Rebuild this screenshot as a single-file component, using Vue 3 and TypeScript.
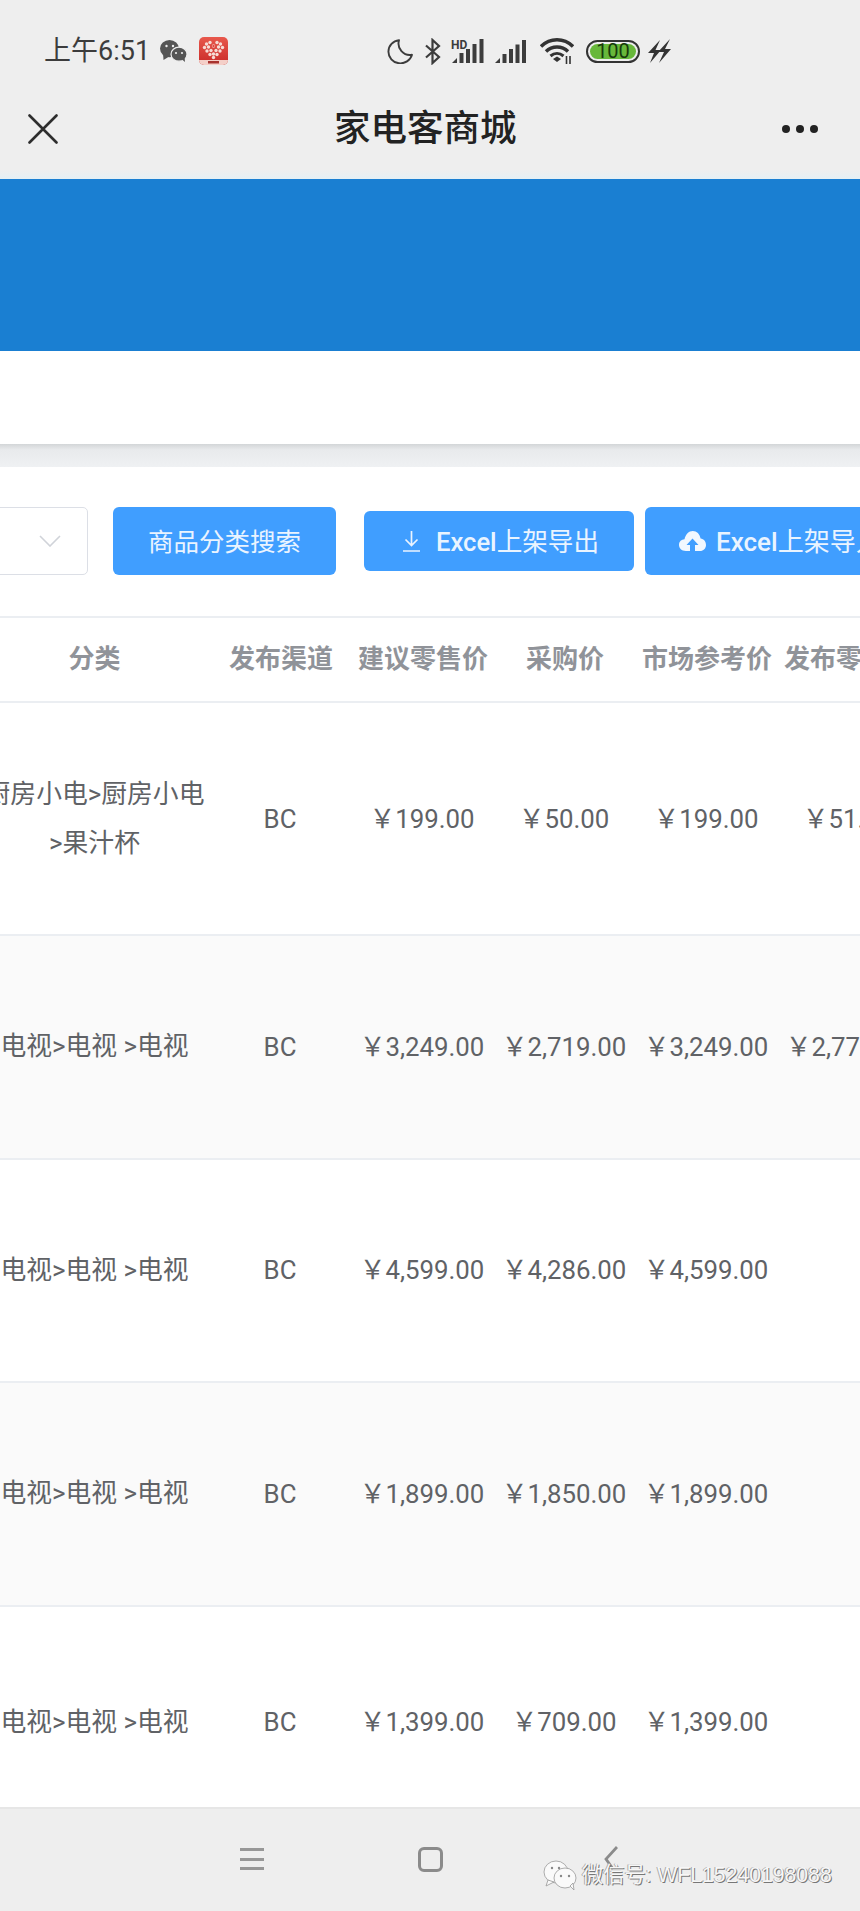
<script setup lang="ts">
interface Row { cat: string; ch: string; retail: string; buy: string; market: string; pub: string }
const rows: Row[] = [
  { cat: '厨房小电>厨房小电\n>果汁杯', ch: 'BC', retail: '￥199.00', buy: '￥50.00', market: '￥199.00', pub: '￥51.00' },
  { cat: '电视>电视 >电视', ch: 'BC', retail: '￥3,249.00', buy: '￥2,719.00', market: '￥3,249.00', pub: '￥2,773.00' },
  { cat: '电视>电视 >电视', ch: 'BC', retail: '￥4,599.00', buy: '￥4,286.00', market: '￥4,599.00', pub: '' },
  { cat: '电视>电视 >电视', ch: 'BC', retail: '￥1,899.00', buy: '￥1,850.00', market: '￥1,899.00', pub: '' },
  { cat: '电视>电视 >电视', ch: 'BC', retail: '￥1,399.00', buy: '￥709.00', market: '￥1,399.00', pub: '' }
]
const heads = ['分类', '发布渠道', '建议零售价', '采购价', '市场参考价', '发布零售价']
const heartDots: [number, number][] = [
  [7.5, 7], [11, 5.5], [18, 5.5], [21.5, 7], [5.5, 10.5], [9.5, 10], [14.5, 9], [19.5, 10], [23.5, 10.5],
  [8, 14], [12, 13.5], [17, 13.5], [21, 14], [11, 17.5], [14.5, 17], [18, 17.5], [14.5, 20.5]
]
</script>

<template>
  <div class="page">
    <div class="status">
      <div class="status-left">
        <span class="time">上午6:51</span>
        <svg class="ic-wechat" width="27" height="22" viewBox="0 0 27 22">
          <ellipse cx="9.5" cy="8.6" rx="9.5" ry="8.6" fill="#555" />
          <path d="M3 13 L3.5 20 L10 16 Z" fill="#555" />
          <ellipse cx="19" cy="14.2" rx="8" ry="7" fill="#555" stroke="#eee" stroke-width="1.2" />
          <path d="M22 19.5 L25 22 L24.5 17 Z" fill="#555" />
          <circle cx="6.5" cy="6" r="1.2" fill="#eee" />
          <circle cx="13" cy="6" r="1.2" fill="#eee" />
          <circle cx="16" cy="13" r="1.1" fill="#eee" />
          <circle cx="22" cy="13" r="1.1" fill="#eee" />
        </svg>
        <svg class="ic-app" width="29" height="28" viewBox="0 0 29 28">
          <defs>
            <linearGradient id="appbg" x1="0" y1="0" x2="0" y2="1">
              <stop offset="0" stop-color="#e8584c" />
              <stop offset="1" stop-color="#c92a28" />
            </linearGradient>
          </defs>
          <rect width="29" height="28" rx="5" fill="url(#appbg)" />
          <path d="M0 23 H29 V23 A5 5 0 0 1 24 28 H5 A5 5 0 0 1 0 23 Z" fill="#f4cfc8" />
          <circle v-for="(d, i) in heartDots" :key="i" :cx="d[0]" :cy="d[1]" r="1.7" fill="#f6dcd6" />
          <circle cx="14.5" cy="9" r="1.2" fill="#e0453d" />
          <rect x="9" y="24" width="11" height="2.5" fill="#a8322e" />
        </svg>
      </div>
      <div class="status-right">
        <svg class="ic-moon" width="26" height="25" viewBox="0 0 26 25"><path d="M12 1.2 A12 11.6 0 1 0 25 15.8 A11.5 11.5 0 0 1 12 1.2 Z" fill="none" stroke="#3c3c3c" stroke-width="1.9" stroke-linejoin="round" /></svg>
        <svg class="ic-bt" width="17" height="27" viewBox="0 0 17 27"><path d="M2 7.5 L15 19 L8.5 25 V2 L15 8 L2 19.5" fill="none" stroke="#3c3c3c" stroke-width="2.2" /></svg>
        <svg class="ic-hd" width="34" height="24" viewBox="0 0 34 24">
          <text x="0" y="10" class="hd-text">HD</text>
          <path d="M1 24 L6 19 V24 Z" fill="#3c3c3c" />
          <rect x="8.5" y="14" width="4" height="10" fill="#3c3c3c" />
          <rect x="15" y="10" width="4" height="14" fill="#3c3c3c" />
          <rect x="21.5" y="5" width="4" height="19" fill="#3c3c3c" />
          <rect x="28.5" y="0" width="4" height="24" fill="#3c3c3c" />
        </svg>
        <svg class="ic-sig" width="32" height="23" viewBox="0 0 32 23">
          <path d="M0 23 L5 18 V23 Z" fill="#3c3c3c" />
          <rect x="7.5" y="14" width="4" height="9" fill="#3c3c3c" />
          <rect x="14" y="9" width="4" height="14" fill="#3c3c3c" />
          <rect x="20.5" y="4.5" width="4" height="18.5" fill="#3c3c3c" />
          <rect x="27" y="0" width="4" height="23" fill="#3c3c3c" />
        </svg>
        <svg class="ic-wifi" width="34" height="26" viewBox="0 0 34 26">
          <path d="M1 8.5 C10 -0.5 24 -0.5 33 8.5" fill="none" stroke="#333" stroke-width="3.4" />
          <path d="M6 13.5 C12 7.5 22 7.5 28 13.5" fill="none" stroke="#333" stroke-width="3.4" />
          <path d="M10.5 18 C14.5 14.5 19.5 14.5 23.5 18" fill="none" stroke="#333" stroke-width="3" />
          <path d="M13 21 L17 18.6 L21 21 L17 24 Z" fill="#333" />
          <path d="M26.5 18 V26 M30 18 V26" stroke="#333" stroke-width="1.6" />
        </svg>
        <div class="battery"><span>100</span></div>
        <svg class="ic-bolt" width="23" height="24" viewBox="0 0 23 24">
          <path d="M12 1 L0 14 H6 L2 24 L13 11 H7.5 Z" fill="#333" />
          <path d="M22 0 L10 13 H16 L11 24 L23 10 H17 Z" fill="#333" />
        </svg>
      </div>
    </div>

    <div class="nav">
      <svg class="ic-close" width="30" height="30" viewBox="0 0 30 30"><path d="M1.5 1.5 L28.5 28.5 M28.5 1.5 L1.5 28.5" stroke="#2d2d2d" stroke-width="2.6" stroke-linecap="round" /></svg>
      <h1 class="title">家电客商城</h1>
      <div class="dots"><i></i><i></i><i></i></div>
    </div>
    <div class="tint"></div>

    <div class="banner"></div>
    <div class="subbar"></div>
    <div class="shadow"></div>

    <div class="toolbar">
      <div class="select">
        <svg width="22" height="12" viewBox="0 0 22 12"><path d="M1 1 L11 11 L21 1" fill="none" stroke="#d0d3d9" stroke-width="1.6" /></svg>
      </div>
      <button class="btn btn-search"><span class="lift">商品分类搜索</span></button>
      <button class="btn btn-export">
        <svg width="17" height="21" viewBox="0 0 17 21"><path d="M8.5 0 V14 M2.5 8.5 L8.5 14.5 L14.5 8.5 M0 20 H17" fill="none" stroke="#eaf4ff" stroke-width="1.7" /></svg>
        <span class="lift"><b class="latin">Excel</b>上架导出</span>
      </button>
      <button class="btn btn-import">
        <svg width="27" height="20" viewBox="0 0 27 20"><path d="M7 20 C2.5 20 0 17 0 14 C0 10.5 2.5 8.5 5.5 8.3 C6.5 3.5 9.8 0 13.8 0 C17.8 0 20.8 3 21.6 7.6 C24.8 8 27 10.6 27 14 C27 17.4 24.4 20 21 20 H16 V14 H19.5 L13.5 7.5 L7.5 14 H11 V20 Z" fill="#f2f8ff" /></svg>
        <span class="lift"><b class="latin">Excel</b>上架导入</span>
      </button>
    </div>

    <div class="table-wrap">
      <table class="table">
        <colgroup>
          <col class="c-cat" />
          <col v-for="n in 5" :key="n" class="c-num" />
        </colgroup>
        <thead>
          <tr><th v-for="h in heads" :key="h">{{ h }}</th></tr>
        </thead>
        <tbody>
          <tr v-for="(r, i) in rows" :key="i" :class="{ striped: i % 2 === 1, first: i === 0, last: i === rows.length - 1 }">
            <td class="cat">{{ r.cat }}</td>
            <td>{{ r.ch }}</td>
            <td>{{ r.retail }}</td>
            <td>{{ r.buy }}</td>
            <td>{{ r.market }}</td>
            <td>{{ r.pub }}</td>
          </tr>
        </tbody>
      </table>
    </div>

    <div class="sysnav">
      <div class="sys-ham"><i></i><i></i><i></i></div>
      <div class="sys-square"></div>
      <svg class="sys-back" width="14" height="26" viewBox="0 0 14 26"><path d="M13 1 L2 13 L9 23" fill="none" stroke="#8b8b8b" stroke-width="2.8" /></svg>
      <div class="mark">
        <svg width="34" height="30" viewBox="0 0 34 30">
          <ellipse cx="13" cy="12" rx="12" ry="11" fill="#fafafa" stroke="#999" stroke-width=".8" />
          <path d="M5 20 L3 26 L11 22 Z" fill="#fafafa" stroke="#999" stroke-width=".8" />
          <ellipse cx="22" cy="18" rx="11" ry="10" fill="#fafafa" stroke="#999" stroke-width=".8" />
          <path d="M27 26 L31 30 L30 23 Z" fill="#fafafa" stroke="#999" stroke-width=".8" />
          <circle cx="9" cy="8" r="1.2" fill="#888" /><circle cx="16" cy="8" r="1.2" fill="#888" />
          <circle cx="18" cy="16" r="1.2" fill="#888" /><circle cx="26" cy="16" r="1.2" fill="#888" />
        </svg>
        <span>微信号: WFL15240198088</span>
      </div>
    </div>
  </div>
</template>

<style scoped>
.page {
  width: 860px;
  height: 1911px;
  display: flex;
  flex-direction: column;
  overflow: hidden;
  background: #fff;
  font-family: Roboto, "Noto Sans CJK SC", sans-serif;
}
.status {
  height: 88px;
  padding-top: 14px;
  box-sizing: border-box;
  background: #eee;
  display: flex;
  align-items: center;
  flex-shrink: 0;
}
.status-left { display: flex; align-items: center; margin-left: 44px; }
.time { font-size: 27px; color: #3c3c3c; line-height: 1; width: 103px; white-space: nowrap; }
.ic-wechat { margin-left: 13px; }
.ic-app { margin-left: 12px; }
.status-right { display: flex; align-items: center; position: absolute; left: 387px; height: 30px; }
.ic-bt { margin-left: 11px; }
.ic-hd { margin-left: 10px; }
.ic-sig { margin-left: 10px; }
.ic-wifi { margin-left: 13px; }
.hd-text { font: 700 12px Roboto, sans-serif; fill: #3c3c3c; }
.battery {
  margin-left: 12px;
  width: 54px;
  height: 23px;
  box-sizing: border-box;
  border: 2px solid #333;
  border-radius: 12px;
  padding: 2px;
  display: flex;
}
.battery span {
  flex: 1;
  background: #68b83b;
  border-radius: 8px;
  color: #173a0c;
  font-size: 20px;
  line-height: 15px;
  text-align: center;
}
.ic-bolt { margin-left: 8px; }
.nav {
  height: 82px;
  background: #eee;
  display: flex;
  align-items: center;
  position: relative;
  flex-shrink: 0;
}
.ic-close { margin-left: 28px; }
.title {
  position: absolute;
  left: 334px;
  margin: 0;
  font-size: 36.5px;
  font-weight: 500;
  color: #222;
  line-height: 1;
  white-space: nowrap;
}
.dots { margin-left: auto; margin-right: 42px; display: flex; gap: 6px; }
.dots i { width: 8px; height: 8px; border-radius: 50%; background: #222; display: block; }
.tint { height: 9px; background: linear-gradient(#efefef, #e5f0f5); flex-shrink: 0; }
.banner { height: 172px; background: #1a7fd2; flex-shrink: 0; }
.subbar { height: 93px; background: #fff; flex-shrink: 0; }
.shadow { height: 23px; background: linear-gradient(#d3d6d8, #e8eaec 25%, #eff1f3); flex-shrink: 0; }
.toolbar {
  height: 151px;
  box-sizing: border-box;
  padding-bottom: 1px;
  border-bottom: 2px solid #ebeef2;
  display: flex;
  align-items: center;
  flex-shrink: 0;
}
.select {
  width: 100px;
  height: 68px;
  box-sizing: border-box;
  margin-left: -12px;
  border: 1.5px solid #dcdfe6;
  border-radius: 5px;
  display: flex;
  align-items: center;
  justify-content: flex-end;
  padding-right: 26px;
  flex-shrink: 0;
}
.btn {
  border: none;
  padding: 0;
  background: #409eff;
  color: #eaf4ff;
  font-family: inherit;
  font-size: 25.5px;
  border-radius: 6px;
  display: flex;
  align-items: center;
  justify-content: center;
  flex-shrink: 0;
  white-space: nowrap;
}
.lift { display: block; margin-bottom: 4px; }
.latin { font-weight: 500; }
.btn-search { width: 223px; height: 68px; margin-left: 25px; }
.btn-export { width: 270px; height: 60px; margin-left: 28px; gap: 16px; font-size: 25.6px; padding-left: 4px; }
.btn-import { width: 270px; height: 68px; margin-left: 11px; gap: 10px; padding-left: 34px; justify-content: flex-start; font-size: 26px; }
.table-wrap { flex: 1; overflow: hidden; min-height: 0; }
.table {
  width: 941px;
  margin-left: -21px;
  table-layout: fixed;
  border-collapse: collapse;
}
.c-cat { width: 231px; }
.c-num { width: 142px; }
th {
  height: 84px;
  padding: 0 0 6px;
  box-sizing: border-box;
  font-size: 26px;
  font-weight: 700;
  color: #909399;
  border-bottom: 2px solid #ebeef2;
  white-space: nowrap;
  overflow: hidden;
}
td {
  height: 221.5px;
  padding: 0 2px 0 0;
  text-align: center;
  font-size: 25.8px;
  line-height: 30px;
  color: #606266;
  border-bottom: 2px solid #ebeef2;
  white-space: nowrap;
  overflow: visible;
}
.first td { height: 231px; }
.last td { height: 231px; }
td.cat { white-space: pre-line; line-height: 49px; padding: 0; }
.striped td { background: #fafafa; }
.sysnav {
  height: 104px;
  background: #eee;
  border-top: 2px solid #e6e6e6;
  box-sizing: border-box;
  position: relative;
  flex-shrink: 0;
  display: flex;
  align-items: flex-start;
  padding-top: 39px;
}
.sys-ham { margin-left: 240px; width: 24px; height: 22px; display: flex; flex-direction: column; justify-content: space-between; }
.sys-ham i { height: 3px; background: #979797; display: block; }
.sys-square { margin-left: 154px; margin-top: -1px; width: 25px; height: 25px; box-sizing: border-box; border: 3px solid #8b8b8b; border-radius: 6px; }
.sys-back { margin-left: 161px; margin-top: -2px; }
.mark {
  position: absolute;
  left: 543px;
  top: 48px;
  display: flex;
  align-items: center;
  gap: 5px;
}
.mark span {
  font-family: "Liberation Sans", "Noto Sans CJK SC", sans-serif;
  font-size: 21.2px;
  color: #f7f7f7;
  white-space: nowrap;
  margin-bottom: 4px;
  text-shadow: 1px 1px 0 #777, -1px 0 0 #aaa;
}
</style>
